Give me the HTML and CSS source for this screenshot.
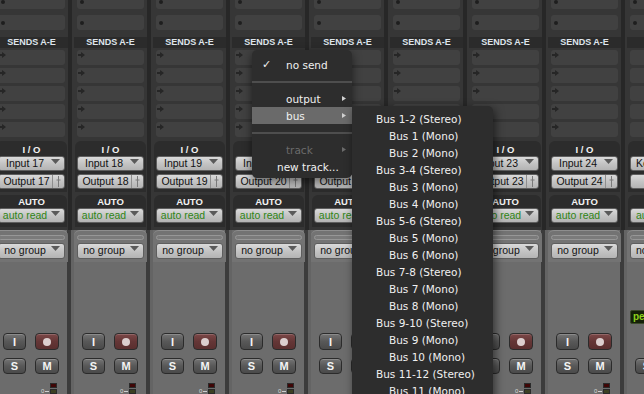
FILE: index.html
```html
<!DOCTYPE html>
<html>
<head>
<meta charset="utf-8">
<link rel="stylesheet" href="styles.css">
</head>
<body>
<div class="mixer">

  <div class="strip">
    <div class="upper">
      <div class="inserts"><div class="slot"><i class="dot"></i></div><div class="slot"><i class="dot"></i></div></div>
      <div class="hdr">SENDS A-E</div>
      <div class="sends">
        <div class="slot snd"><svg class="sa" width="7" height="6" viewBox="0 0 7 6"><path d="M0 2h3V0l4 3-4 3V4H0z"/></svg></div>
        <div class="slot snd"><svg class="sa" width="7" height="6" viewBox="0 0 7 6"><path d="M0 2h3V0l4 3-4 3V4H0z"/></svg></div>
        <div class="slot snd"><svg class="sa" width="7" height="6" viewBox="0 0 7 6"><path d="M0 2h3V0l4 3-4 3V4H0z"/></svg></div>
        <div class="slot snd"><svg class="sa" width="7" height="6" viewBox="0 0 7 6"><path d="M0 2h3V0l4 3-4 3V4H0z"/></svg></div>
        <div class="slot snd"><svg class="sa" width="7" height="6" viewBox="0 0 7 6"><path d="M0 2h3V0l4 3-4 3V4H0z"/></svg></div>
      </div>
      <div class="well io">
        <div class="lbl">I / O</div>
        <div class="btn"><span class="bt">Input 17</span><svg class="tri" width="9" height="5" viewBox="0 0 9 5"><path d="M0 0h9L4.5 5z"/></svg></div>
        <div class="btn out"><span class="bt">Output 17</span><span class="pin"><svg width="5" height="11" viewBox="0 0 5 11"><path d="M2.5 0v11M0.5 4h4" /></svg></span></div>
      </div>
      <div class="well auto">
        <div class="lbl">AUTO</div>
        <div class="btn green"><span class="bt">auto read</span><svg class="tri" width="9" height="5" viewBox="0 0 9 5"><path d="M0 0h9L4.5 5z"/></svg></div>
      </div>
    </div>
    <div class="lower">
      <div class="grp"><div class="bar"></div><div class="btn"><span class="bt">no group</span><svg class="tri" width="9" height="5" viewBox="0 0 9 5"><path d="M0 0h9L4.5 5z"/></svg></div></div>
      <div class="body">
        <div class="brow r1"><div class="tb">I</div><div class="tb rec"><i></i></div></div>
        <div class="brow"><div class="tb">S</div><div class="tb">M</div></div>
        <div class="meter"><span class="mz">0</span><span class="mline"></span><span class="mbox"><i class="red"></i><i class="olive"></i></span></div>
      </div>
    </div>
  </div>

  <div class="strip">
    <div class="upper">
      <div class="inserts"><div class="slot"><i class="dot"></i></div><div class="slot"><i class="dot"></i></div></div>
      <div class="hdr">SENDS A-E</div>
      <div class="sends">
        <div class="slot snd"><svg class="sa" width="7" height="6" viewBox="0 0 7 6"><path d="M0 2h3V0l4 3-4 3V4H0z"/></svg></div>
        <div class="slot snd"><svg class="sa" width="7" height="6" viewBox="0 0 7 6"><path d="M0 2h3V0l4 3-4 3V4H0z"/></svg></div>
        <div class="slot snd"><svg class="sa" width="7" height="6" viewBox="0 0 7 6"><path d="M0 2h3V0l4 3-4 3V4H0z"/></svg></div>
        <div class="slot snd"><svg class="sa" width="7" height="6" viewBox="0 0 7 6"><path d="M0 2h3V0l4 3-4 3V4H0z"/></svg></div>
        <div class="slot snd"><svg class="sa" width="7" height="6" viewBox="0 0 7 6"><path d="M0 2h3V0l4 3-4 3V4H0z"/></svg></div>
      </div>
      <div class="well io">
        <div class="lbl">I / O</div>
        <div class="btn"><span class="bt">Input 18</span><svg class="tri" width="9" height="5" viewBox="0 0 9 5"><path d="M0 0h9L4.5 5z"/></svg></div>
        <div class="btn out"><span class="bt">Output 18</span><span class="pin"><svg width="5" height="11" viewBox="0 0 5 11"><path d="M2.5 0v11M0.5 4h4" /></svg></span></div>
      </div>
      <div class="well auto">
        <div class="lbl">AUTO</div>
        <div class="btn green"><span class="bt">auto read</span><svg class="tri" width="9" height="5" viewBox="0 0 9 5"><path d="M0 0h9L4.5 5z"/></svg></div>
      </div>
    </div>
    <div class="lower">
      <div class="grp"><div class="bar"></div><div class="btn"><span class="bt">no group</span><svg class="tri" width="9" height="5" viewBox="0 0 9 5"><path d="M0 0h9L4.5 5z"/></svg></div></div>
      <div class="body">
        <div class="brow r1"><div class="tb">I</div><div class="tb rec"><i></i></div></div>
        <div class="brow"><div class="tb">S</div><div class="tb">M</div></div>
        <div class="meter"><span class="mz">0</span><span class="mline"></span><span class="mbox"><i class="red"></i><i class="olive"></i></span></div>
      </div>
    </div>
  </div>

  <div class="strip">
    <div class="upper">
      <div class="inserts"><div class="slot"><i class="dot"></i></div><div class="slot"><i class="dot"></i></div></div>
      <div class="hdr">SENDS A-E</div>
      <div class="sends">
        <div class="slot snd"><svg class="sa" width="7" height="6" viewBox="0 0 7 6"><path d="M0 2h3V0l4 3-4 3V4H0z"/></svg></div>
        <div class="slot snd"><svg class="sa" width="7" height="6" viewBox="0 0 7 6"><path d="M0 2h3V0l4 3-4 3V4H0z"/></svg></div>
        <div class="slot snd"><svg class="sa" width="7" height="6" viewBox="0 0 7 6"><path d="M0 2h3V0l4 3-4 3V4H0z"/></svg></div>
        <div class="slot snd"><svg class="sa" width="7" height="6" viewBox="0 0 7 6"><path d="M0 2h3V0l4 3-4 3V4H0z"/></svg></div>
        <div class="slot snd"><svg class="sa" width="7" height="6" viewBox="0 0 7 6"><path d="M0 2h3V0l4 3-4 3V4H0z"/></svg></div>
      </div>
      <div class="well io">
        <div class="lbl">I / O</div>
        <div class="btn"><span class="bt">Input 19</span><svg class="tri" width="9" height="5" viewBox="0 0 9 5"><path d="M0 0h9L4.5 5z"/></svg></div>
        <div class="btn out"><span class="bt">Output 19</span><span class="pin"><svg width="5" height="11" viewBox="0 0 5 11"><path d="M2.5 0v11M0.5 4h4" /></svg></span></div>
      </div>
      <div class="well auto">
        <div class="lbl">AUTO</div>
        <div class="btn green"><span class="bt">auto read</span><svg class="tri" width="9" height="5" viewBox="0 0 9 5"><path d="M0 0h9L4.5 5z"/></svg></div>
      </div>
    </div>
    <div class="lower">
      <div class="grp"><div class="bar"></div><div class="btn"><span class="bt">no group</span><svg class="tri" width="9" height="5" viewBox="0 0 9 5"><path d="M0 0h9L4.5 5z"/></svg></div></div>
      <div class="body">
        <div class="brow r1"><div class="tb">I</div><div class="tb rec"><i></i></div></div>
        <div class="brow"><div class="tb">S</div><div class="tb">M</div></div>
        <div class="meter"><span class="mz">0</span><span class="mline"></span><span class="mbox"><i class="red"></i><i class="olive"></i></span></div>
      </div>
    </div>
  </div>

  <div class="strip">
    <div class="upper">
      <div class="inserts"><div class="slot"><i class="dot"></i></div><div class="slot"><i class="dot"></i></div></div>
      <div class="hdr">SENDS A-E</div>
      <div class="sends">
        <div class="slot snd"><svg class="sa" width="7" height="6" viewBox="0 0 7 6"><path d="M0 2h3V0l4 3-4 3V4H0z"/></svg></div>
        <div class="slot snd"><svg class="sa" width="7" height="6" viewBox="0 0 7 6"><path d="M0 2h3V0l4 3-4 3V4H0z"/></svg></div>
        <div class="slot snd"><svg class="sa" width="7" height="6" viewBox="0 0 7 6"><path d="M0 2h3V0l4 3-4 3V4H0z"/></svg></div>
        <div class="slot snd"><svg class="sa" width="7" height="6" viewBox="0 0 7 6"><path d="M0 2h3V0l4 3-4 3V4H0z"/></svg></div>
        <div class="slot snd"><svg class="sa" width="7" height="6" viewBox="0 0 7 6"><path d="M0 2h3V0l4 3-4 3V4H0z"/></svg></div>
      </div>
      <div class="well io">
        <div class="lbl">I / O</div>
        <div class="btn"><span class="bt">Input 20</span><svg class="tri" width="9" height="5" viewBox="0 0 9 5"><path d="M0 0h9L4.5 5z"/></svg></div>
        <div class="btn out"><span class="bt">Output 20</span><span class="pin"><svg width="5" height="11" viewBox="0 0 5 11"><path d="M2.5 0v11M0.5 4h4" /></svg></span></div>
      </div>
      <div class="well auto">
        <div class="lbl">AUTO</div>
        <div class="btn green"><span class="bt">auto read</span><svg class="tri" width="9" height="5" viewBox="0 0 9 5"><path d="M0 0h9L4.5 5z"/></svg></div>
      </div>
    </div>
    <div class="lower">
      <div class="grp"><div class="bar"></div><div class="btn"><span class="bt">no group</span><svg class="tri" width="9" height="5" viewBox="0 0 9 5"><path d="M0 0h9L4.5 5z"/></svg></div></div>
      <div class="body">
        <div class="brow r1"><div class="tb">I</div><div class="tb rec"><i></i></div></div>
        <div class="brow"><div class="tb">S</div><div class="tb">M</div></div>
        <div class="meter"><span class="mz">0</span><span class="mline"></span><span class="mbox"><i class="red"></i><i class="olive"></i></span></div>
      </div>
    </div>
  </div>

  <div class="strip">
    <div class="upper">
      <div class="inserts"><div class="slot"><i class="dot"></i></div><div class="slot"><i class="dot"></i></div></div>
      <div class="hdr">SENDS A-E</div>
      <div class="sends">
        <div class="slot snd"><svg class="sa" width="7" height="6" viewBox="0 0 7 6"><path d="M0 2h3V0l4 3-4 3V4H0z"/></svg></div>
        <div class="slot snd"><svg class="sa" width="7" height="6" viewBox="0 0 7 6"><path d="M0 2h3V0l4 3-4 3V4H0z"/></svg></div>
        <div class="slot snd"><svg class="sa" width="7" height="6" viewBox="0 0 7 6"><path d="M0 2h3V0l4 3-4 3V4H0z"/></svg></div>
        <div class="slot snd"><svg class="sa" width="7" height="6" viewBox="0 0 7 6"><path d="M0 2h3V0l4 3-4 3V4H0z"/></svg></div>
        <div class="slot snd"><svg class="sa" width="7" height="6" viewBox="0 0 7 6"><path d="M0 2h3V0l4 3-4 3V4H0z"/></svg></div>
      </div>
      <div class="well io">
        <div class="lbl">I / O</div>
        <div class="btn"><span class="bt">Input 21</span><svg class="tri" width="9" height="5" viewBox="0 0 9 5"><path d="M0 0h9L4.5 5z"/></svg></div>
        <div class="btn out"><span class="bt">Output 21</span><span class="pin"><svg width="5" height="11" viewBox="0 0 5 11"><path d="M2.5 0v11M0.5 4h4" /></svg></span></div>
      </div>
      <div class="well auto">
        <div class="lbl">AUTO</div>
        <div class="btn green"><span class="bt">auto read</span><svg class="tri" width="9" height="5" viewBox="0 0 9 5"><path d="M0 0h9L4.5 5z"/></svg></div>
      </div>
    </div>
    <div class="lower">
      <div class="grp"><div class="bar"></div><div class="btn"><span class="bt">no group</span><svg class="tri" width="9" height="5" viewBox="0 0 9 5"><path d="M0 0h9L4.5 5z"/></svg></div></div>
      <div class="body">
        <div class="brow r1"><div class="tb">I</div><div class="tb rec"><i></i></div></div>
        <div class="brow"><div class="tb">S</div><div class="tb">M</div></div>
        <div class="meter"><span class="mz">0</span><span class="mline"></span><span class="mbox"><i class="red"></i><i class="olive"></i></span></div>
      </div>
    </div>
  </div>

  <div class="strip">
    <div class="upper">
      <div class="inserts"><div class="slot"><i class="dot"></i></div><div class="slot"><i class="dot"></i></div></div>
      <div class="hdr">SENDS A-E</div>
      <div class="sends">
        <div class="slot snd"><svg class="sa" width="7" height="6" viewBox="0 0 7 6"><path d="M0 2h3V0l4 3-4 3V4H0z"/></svg></div>
        <div class="slot snd"><svg class="sa" width="7" height="6" viewBox="0 0 7 6"><path d="M0 2h3V0l4 3-4 3V4H0z"/></svg></div>
        <div class="slot snd"><svg class="sa" width="7" height="6" viewBox="0 0 7 6"><path d="M0 2h3V0l4 3-4 3V4H0z"/></svg></div>
        <div class="slot snd"><svg class="sa" width="7" height="6" viewBox="0 0 7 6"><path d="M0 2h3V0l4 3-4 3V4H0z"/></svg></div>
        <div class="slot snd"><svg class="sa" width="7" height="6" viewBox="0 0 7 6"><path d="M0 2h3V0l4 3-4 3V4H0z"/></svg></div>
      </div>
      <div class="well io">
        <div class="lbl">I / O</div>
        <div class="btn"><span class="bt">Input 22</span><svg class="tri" width="9" height="5" viewBox="0 0 9 5"><path d="M0 0h9L4.5 5z"/></svg></div>
        <div class="btn out"><span class="bt">Output 22</span><span class="pin"><svg width="5" height="11" viewBox="0 0 5 11"><path d="M2.5 0v11M0.5 4h4" /></svg></span></div>
      </div>
      <div class="well auto">
        <div class="lbl">AUTO</div>
        <div class="btn green"><span class="bt">auto read</span><svg class="tri" width="9" height="5" viewBox="0 0 9 5"><path d="M0 0h9L4.5 5z"/></svg></div>
      </div>
    </div>
    <div class="lower">
      <div class="grp"><div class="bar"></div><div class="btn"><span class="bt">no group</span><svg class="tri" width="9" height="5" viewBox="0 0 9 5"><path d="M0 0h9L4.5 5z"/></svg></div></div>
      <div class="body">
        <div class="brow r1"><div class="tb">I</div><div class="tb rec"><i></i></div></div>
        <div class="brow"><div class="tb">S</div><div class="tb">M</div></div>
        <div class="meter"><span class="mz">0</span><span class="mline"></span><span class="mbox"><i class="red"></i><i class="olive"></i></span></div>
      </div>
    </div>
  </div>

  <div class="strip">
    <div class="upper">
      <div class="inserts"><div class="slot"><i class="dot"></i></div><div class="slot"><i class="dot"></i></div></div>
      <div class="hdr">SENDS A-E</div>
      <div class="sends">
        <div class="slot snd"><svg class="sa" width="7" height="6" viewBox="0 0 7 6"><path d="M0 2h3V0l4 3-4 3V4H0z"/></svg></div>
        <div class="slot snd"><svg class="sa" width="7" height="6" viewBox="0 0 7 6"><path d="M0 2h3V0l4 3-4 3V4H0z"/></svg></div>
        <div class="slot snd"><svg class="sa" width="7" height="6" viewBox="0 0 7 6"><path d="M0 2h3V0l4 3-4 3V4H0z"/></svg></div>
        <div class="slot snd"><svg class="sa" width="7" height="6" viewBox="0 0 7 6"><path d="M0 2h3V0l4 3-4 3V4H0z"/></svg></div>
        <div class="slot snd"><svg class="sa" width="7" height="6" viewBox="0 0 7 6"><path d="M0 2h3V0l4 3-4 3V4H0z"/></svg></div>
      </div>
      <div class="well io">
        <div class="lbl">I / O</div>
        <div class="btn"><span class="bt">Input 23</span><svg class="tri" width="9" height="5" viewBox="0 0 9 5"><path d="M0 0h9L4.5 5z"/></svg></div>
        <div class="btn out"><span class="bt">Output 23</span><span class="pin"><svg width="5" height="11" viewBox="0 0 5 11"><path d="M2.5 0v11M0.5 4h4" /></svg></span></div>
      </div>
      <div class="well auto">
        <div class="lbl">AUTO</div>
        <div class="btn green"><span class="bt">auto read</span><svg class="tri" width="9" height="5" viewBox="0 0 9 5"><path d="M0 0h9L4.5 5z"/></svg></div>
      </div>
    </div>
    <div class="lower">
      <div class="grp"><div class="bar"></div><div class="btn"><span class="bt">no group</span><svg class="tri" width="9" height="5" viewBox="0 0 9 5"><path d="M0 0h9L4.5 5z"/></svg></div></div>
      <div class="body">
        <div class="brow r1"><div class="tb">I</div><div class="tb rec"><i></i></div></div>
        <div class="brow"><div class="tb">S</div><div class="tb">M</div></div>
        <div class="meter"><span class="mz">0</span><span class="mline"></span><span class="mbox"><i class="red"></i><i class="olive"></i></span></div>
      </div>
    </div>
  </div>

  <div class="strip">
    <div class="upper">
      <div class="inserts"><div class="slot"><i class="dot"></i></div><div class="slot"><i class="dot"></i></div></div>
      <div class="hdr">SENDS A-E</div>
      <div class="sends">
        <div class="slot snd"><svg class="sa" width="7" height="6" viewBox="0 0 7 6"><path d="M0 2h3V0l4 3-4 3V4H0z"/></svg></div>
        <div class="slot snd"><svg class="sa" width="7" height="6" viewBox="0 0 7 6"><path d="M0 2h3V0l4 3-4 3V4H0z"/></svg></div>
        <div class="slot snd"><svg class="sa" width="7" height="6" viewBox="0 0 7 6"><path d="M0 2h3V0l4 3-4 3V4H0z"/></svg></div>
        <div class="slot snd"><svg class="sa" width="7" height="6" viewBox="0 0 7 6"><path d="M0 2h3V0l4 3-4 3V4H0z"/></svg></div>
        <div class="slot snd"><svg class="sa" width="7" height="6" viewBox="0 0 7 6"><path d="M0 2h3V0l4 3-4 3V4H0z"/></svg></div>
      </div>
      <div class="well io">
        <div class="lbl">I / O</div>
        <div class="btn"><span class="bt">Input 24</span><svg class="tri" width="9" height="5" viewBox="0 0 9 5"><path d="M0 0h9L4.5 5z"/></svg></div>
        <div class="btn out"><span class="bt">Output 24</span><span class="pin"><svg width="5" height="11" viewBox="0 0 5 11"><path d="M2.5 0v11M0.5 4h4" /></svg></span></div>
      </div>
      <div class="well auto">
        <div class="lbl">AUTO</div>
        <div class="btn green"><span class="bt">auto read</span><svg class="tri" width="9" height="5" viewBox="0 0 9 5"><path d="M0 0h9L4.5 5z"/></svg></div>
      </div>
    </div>
    <div class="lower">
      <div class="grp"><div class="bar"></div><div class="btn"><span class="bt">no group</span><svg class="tri" width="9" height="5" viewBox="0 0 9 5"><path d="M0 0h9L4.5 5z"/></svg></div></div>
      <div class="body">
        <div class="brow r1"><div class="tb">I</div><div class="tb rec"><i></i></div></div>
        <div class="brow"><div class="tb">S</div><div class="tb">M</div></div>
        <div class="meter"><span class="mz">0</span><span class="mline"></span><span class="mbox"><i class="red"></i><i class="olive"></i></span></div>
      </div>
    </div>
  </div>

  <div class="strip">
    <div class="upper">
      <div class="inserts"><div class="slot"><i class="dot"></i></div><div class="slot"><i class="dot"></i></div></div>
      <div class="hdr"></div>
      <div class="sends">
        <div class="slot snd"></div>
        <div class="slot snd"></div>
        <div class="slot snd"></div>
        <div class="slot snd"></div>
        <div class="slot snd"></div>
      </div>
      <div class="well io">
        <div class="lbl"></div>
        <div class="btn"><span class="bt left">Ke</span></div>
        <div class="btn"><span class="bt"></span></div>
      </div>
      <div class="well auto">
        <div class="lbl"></div>
        <div class="btn green"><span class="bt left">au</span></div>
      </div>
    </div>
    <div class="lower">
      <div class="grp"><div class="bar"></div><div class="btn"><span class="bt left">no</span></div></div>
      <div class="body aux">
        <div class="lcd">pe</div>
        <div class="brow"><div class="tb">S</div><div class="tb">M</div></div>
      </div>
    </div>
  </div>

</div>

<div class="menu">
  <div class="mi"><span class="ck">✓</span><span>no send</span></div>
  <div class="sep"><i></i></div>
  <div class="mi"><span class="ck"></span><span>output</span><svg class="sub-arr" width="4" height="5" viewBox="0 0 4 5"><path d="M0 0l4 2.5L0 5z"/></svg></div>
  <div class="mi hl"><span class="ck"></span><span>bus</span><svg class="sub-arr" width="4" height="5" viewBox="0 0 4 5"><path d="M0 0l4 2.5L0 5z"/></svg></div>
  <div class="sep"><i></i></div>
  <div class="mi dis"><span class="ck"></span><span>track</span><svg class="sub-arr" width="4" height="5" viewBox="0 0 4 5"><path d="M0 0l4 2.5L0 5z"/></svg></div>
  <div class="mi nt"><span>new track...</span></div>
</div>

<div class="submenu">
  <div class="si">Bus 1-2 (Stereo)</div>
  <div class="si mono">Bus 1 (Mono)</div>
  <div class="si mono">Bus 2 (Mono)</div>
  <div class="si">Bus 3-4 (Stereo)</div>
  <div class="si mono">Bus 3 (Mono)</div>
  <div class="si mono">Bus 4 (Mono)</div>
  <div class="si">Bus 5-6 (Stereo)</div>
  <div class="si mono">Bus 5 (Mono)</div>
  <div class="si mono">Bus 6 (Mono)</div>
  <div class="si">Bus 7-8 (Stereo)</div>
  <div class="si mono">Bus 7 (Mono)</div>
  <div class="si mono">Bus 8 (Mono)</div>
  <div class="si">Bus 9-10 (Stereo)</div>
  <div class="si mono">Bus 9 (Mono)</div>
  <div class="si mono">Bus 10 (Mono)</div>
  <div class="si">Bus 11-12 (Stereo)</div>
  <div class="si mono">Bus 11 (Mono)</div>
</div>
</body>
</html>
```
FILE: styles.css
```css
* { box-sizing: border-box; margin: 0; padding: 0; }
html, body {
  width: 644px;
  height: 394px;
  overflow: hidden;
  background: #2a2a2a;
}
body {
  position: relative;
  font-family: "Liberation Sans", Arial, sans-serif;
}
.mixer {
  display: flex;
  margin-left: -5px;
  height: 394px;
}
.strip {
  width: 79px;
  flex: none;
  display: flex;
  flex-direction: column;
}
.upper {
  height: 230px;
  display: flex;
  flex-direction: column;
  background: linear-gradient(to right, #363636 0 73px, #272727 73px 77px, #363636 77px);
}
.inserts {
  margin-top: -6px;
  height: 43px;
  padding: 0 3px;
  display: flex;
  flex-direction: column;
  gap: 6px;
}
.slot {
  width: 67px;
  height: 15px;
  flex: none;
  background: #414141;
  border-radius: 3px;
  display: flex;
  align-items: center;
  padding-left: 3px;
}
.dot {
  width: 4px;
  height: 4px;
  border-radius: 50%;
  background: #1e1e1e;
}
.hdr {
  width: 73px;
  height: 11px;
  background: #2b2b2b;
  color: #dfe5ec;
  font: bold 9px/11px "Liberation Sans", Arial, sans-serif;
  text-align: center;
}
.sends {
  height: 93px;
  padding: 2px 3px 4px;
  display: flex;
  flex-direction: column;
  gap: 3px;
}
.snd {
  align-items: flex-start;
  padding: 2px 0 0 1px;
}
.sa { fill: #262626; }
.well {
  width: 71px;
  margin-left: 1px;
  background: #2c2c2c;
  border-radius: 6px 6px 0 0;
  padding: 0 2px;
  display: flex;
  flex-direction: column;
}
.io { height: 51px; gap: 3px; margin-bottom: 3px; }
.io .lbl { height: 15px; line-height: 18px; margin-bottom: -3px; }
.auto { height: 32px; margin-bottom: 3px; }
.auto .lbl { height: 13px; line-height: 14px; }
.lbl {
  color: #f2f2f2;
  font: bold 9.5px "Liberation Sans", Arial, sans-serif;
  text-align: center;
}
.btn {
  width: 67px;
  height: 15px;
  flex: none;
  display: flex;
  align-items: flex-start;
  background: linear-gradient(#dadada, #c4c4c4 50%, #b4b4b4);
  border: 1px solid #5e5e5e;
  border-radius: 3px;
  color: #111;
  font: 10.5px/13px "Liberation Sans", Arial, sans-serif;
  overflow: hidden;
  white-space: nowrap;
}
.bt {
  flex: 1;
  text-align: center;
  padding-left: 2px;
}
.bt.left { text-align: left; padding-left: 5px; }
.tri {
  fill: #5a5a5a;
  margin: 2px 4px 0 2px;
}
.green { color: #2f8515; }
.out .pin {
  width: 12px;
  height: 13px;
  border-left: 1px solid #8e8e8e;
  display: flex;
  align-items: center;
  justify-content: center;
}
.pin svg { stroke: #7a7a7a; stroke-width: 1; fill: none; }
.lower {
  flex: 1;
  background: linear-gradient(to right, #6c6c6c 0 72px, #3c3c3c 72px 76px, #646464 76px);
}
.grp {
  width: 73px;
  height: 32px;
  background: #737373;
  border-top: 1px solid #8e8e8e;
  border-radius: 6px 6px 0 0;
  padding: 4px 3px 0;
}
.bar {
  height: 5px;
  border: 1px solid #979797;
  border-radius: 3px;
  background: #7b7b7b;
  margin-bottom: 3px;
}
.grp .btn { height: 16px; }
.body {
  padding-top: 71px;
}
.brow {
  display: flex;
  gap: 9px;
  padding-left: 8px;
  height: 16px;
}
.brow.r1 { height: 17px; margin-bottom: 8px; }
.tb {
  width: 23px;
  height: 100%;
  border: 1px solid #2b2b2b;
  border-radius: 4px;
  background: linear-gradient(#747474, #585858 50%, #4a4a4a);
  box-shadow: inset 0 1px 0 rgba(255,255,255,0.18);
  color: #f4f4f4;
  font: bold 11px "Liberation Sans", Arial, sans-serif;
  display: flex;
  align-items: center;
  justify-content: center;
}
.tb + .tb { width: 24px; }
.rec {
  background: linear-gradient(#7c4747, #643636 50%, #5a2f2f);
}
.rec i {
  width: 8px;
  height: 8px;
  border-radius: 50%;
  background: #dccfcf;
}
.meter {
  margin-top: 9px;
  display: flex;
  align-items: flex-start;
  padding-left: 46px;
  height: 11px;
}
.mz {
  color: #d8d8d8;
  font: 6px/8px "Liberation Sans", Arial, sans-serif;
  margin-top: 4px;
}
.mline {
  width: 4px;
  height: 1px;
  background: #cfcfcf;
  margin: 8px 1px 0 1px;
}
.mbox {
  display: flex;
  flex-direction: column;
  gap: 1px;
}
.mbox i {
  width: 7px;
  height: 5px;
  border: 1px solid #2a2a2a;
}
.mbox .red { background: #3f0606; }
.mbox .olive { background: #3c3f22; }
.aux { padding-top: 48px; }
.lcd {
  width: 40px;
  height: 14px;
  margin-left: 3px;
  margin-bottom: 34px;
  background: #142008;
  border: 1px solid #3b4a2a;
  border-radius: 2px;
  color: #8fd21d;
  font: bold 10px/12px "Liberation Sans", Arial, sans-serif;
  padding-left: 2px;
}

/* popup menus */
.menu {
  position: absolute;
  left: 252px;
  top: 50px;
  width: 100px;
  height: 128px;
  padding-top: 6px;
  background: #2d2d2d;
  border-radius: 5px;
  box-shadow: 0 3px 10px rgba(0,0,0,0.55);
  color: #f0f0f0;
  font: 10.5px "DejaVu Sans", sans-serif;
}
.mi {
  height: 17px;
  display: flex;
  align-items: center;
  padding-left: 10px;
  padding-right: 6px;
}
.ck { width: 24px; font-size: 11px; }
.sub-arr { margin-left: auto; fill: #d0d0d0; }
.hl { background: #6a6a6a; }
.dis { color: #6b6b6b; }
.dis .sub-arr { fill: #6b6b6b; }
.nt { padding-left: 25px; }
.sep {
  height: 17px;
  display: flex;
  align-items: center;
}
.sep i {
  flex: 1;
  height: 2px;
  background: #4e4e4e;
}
.submenu {
  position: absolute;
  left: 352px;
  top: 106px;
  width: 141px;
  height: 300px;
  padding-top: 5px;
  background: #2d2d2d;
  border-radius: 0 5px 0 0;
  box-shadow: 2px 3px 10px rgba(0,0,0,0.55);
  color: #f0f0f0;
  font: 10.5px/17px "DejaVu Sans", sans-serif;
}
.si {
  height: 17px;
  padding-left: 24px;
  white-space: nowrap;
}
.si.mono { padding-left: 37px; }
```
